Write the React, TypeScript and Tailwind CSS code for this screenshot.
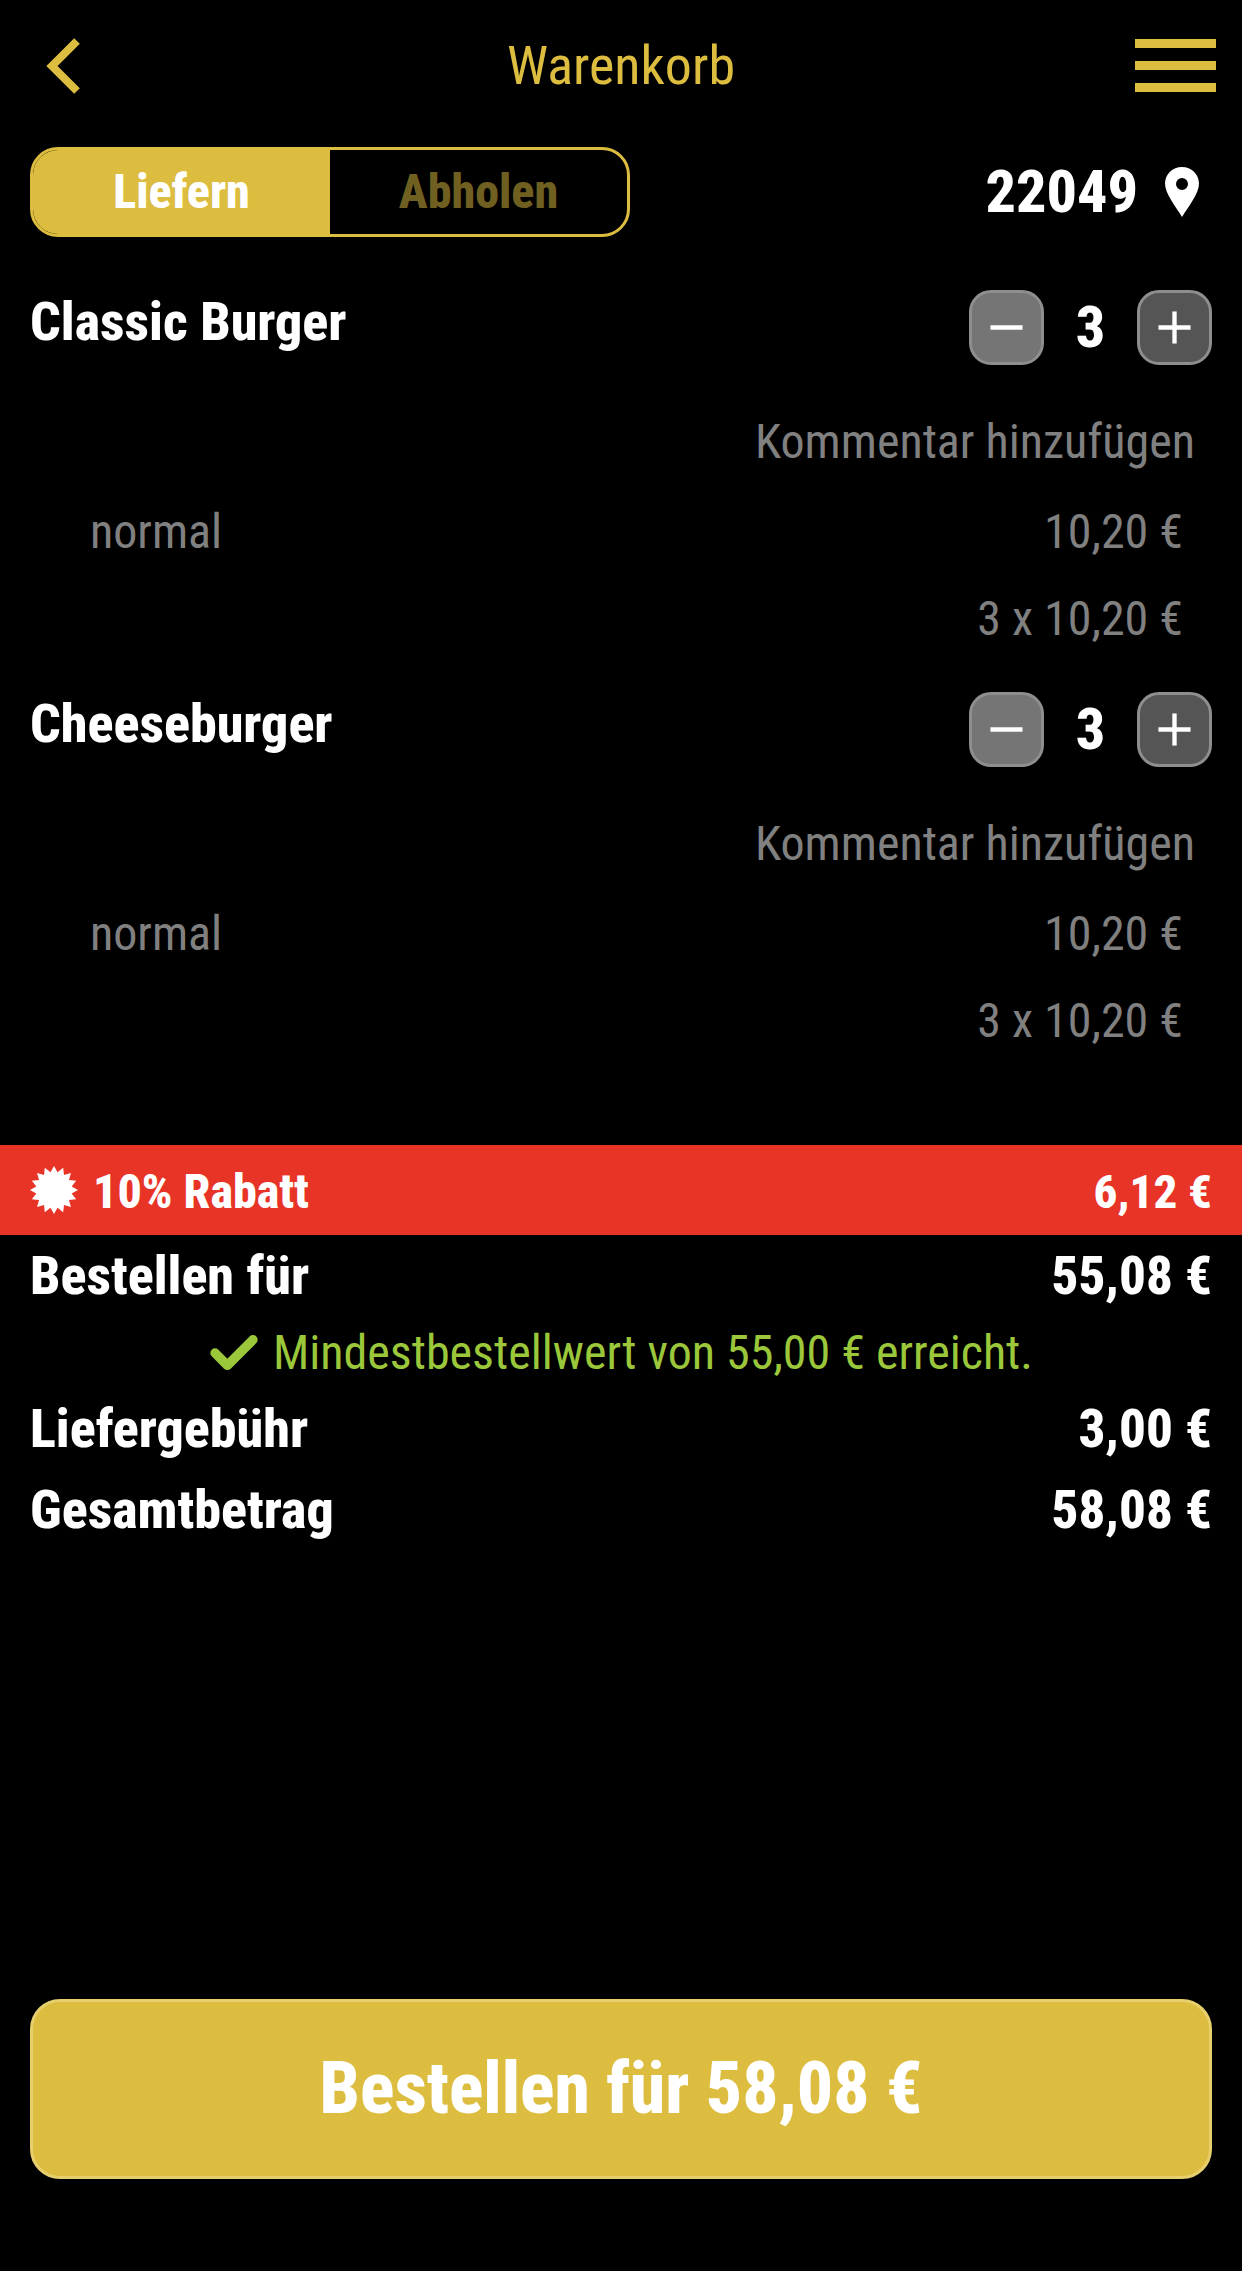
import { Minus, Plus } from "lucide-react";

const font = "font-['Roboto','Liberation_Sans',sans-serif] [font-stretch:75%]";

// 16 spike seal for the discount badge
const sealPoints = Array.from({ length: 32 }, (_, i) => {
  const r = i % 2 === 0 ? 24 : 18;
  const a = (i * Math.PI) / 16 - Math.PI / 2;
  return `${(r * Math.cos(a)).toFixed(2)},${(r * Math.sin(a)).toFixed(2)}`;
}).join(" ");

function Stepper() {
  return (
    <div className="flex items-center h-[75px]">
      <button className="w-[75px] h-[75px] rounded-[22px] bg-[#757575] border-[3px] border-[#8e8e8e] flex items-center justify-center">
        <Minus className="w-[55px] h-[55px] text-white" strokeWidth={1.9} strokeLinecap="butt" />
      </button>
      <span className="w-[93px] text-center text-[58px] leading-[75px] font-extrabold text-white">3</span>
      <button className="w-[75px] h-[75px] rounded-[22px] bg-[#555555] border-[3px] border-[#8e8e8e] flex items-center justify-center">
        <Plus className="w-[55px] h-[55px] text-white" strokeWidth={1.9} strokeLinecap="butt" />
      </button>
    </div>
  );
}

function CartItem({ name }: { name: string }) {
  return (
    <div className="h-[402px]">
      <div className="flex items-start justify-between h-[122px]">
        <span className="text-[54px] leading-[64px] font-extrabold text-white">{name}</span>
        <Stepper />
      </div>
      <div className="text-right text-[48px] leading-[60px] text-[#808080] pr-[17px]">Kommentar hinzufügen</div>
      <div className="flex justify-between text-[48px] leading-[60px] text-[#808080] pl-[60px] pr-[29px] mt-[30px]">
        <span>normal</span>
        <span>10,20 €</span>
      </div>
      <div className="text-right text-[48px] leading-[60px] text-[#808080] pr-[29px] mt-[27px]">3 x 10,20 €</div>
    </div>
  );
}

function SummaryRow({ label, value }: { label: string; value: string }) {
  return (
    <div className="flex justify-between text-[54px] leading-[60px] font-extrabold text-white px-[30px]">
      <span>{label}</span>
      <span className="text-[53px]">{value}</span>
    </div>
  );
}

export default function App() {
  return (
    <div className={`w-[1242px] h-[2271px] bg-black overflow-hidden ${font}`}>
      {/* Header */}
      <div className="relative h-[130px] flex items-center justify-center">
        <svg viewBox="0 0 36 56" className="absolute left-[46px] top-[38px] w-[36px] h-[56px]">
          <polyline points="31,3 6,28 31,53" fill="none" stroke="#dcbd3f" strokeWidth="8" />
        </svg>
        <span className="text-[54px] text-[#dcbd3f]">Warenkorb</span>
        <div className="absolute left-[1135px] top-[39px] w-[81px] flex flex-col gap-[13px]">
          <div className="h-[9px] bg-[#dcbd3f]" />
          <div className="h-[9px] bg-[#dcbd3f]" />
          <div className="h-[9px] bg-[#dcbd3f]" />
        </div>
      </div>

      {/* Delivery toggle + zip */}
      <div className="flex items-center justify-between h-[90px] mt-[17px] pl-[30px] pr-[43px]">
        <div className="flex w-[600px] h-[90px] rounded-[28px] border-[3px] border-[#dcbd3f] overflow-hidden">
          <div className="w-[297px] bg-[#dcbd3f] flex items-center justify-center text-[48px] font-extrabold text-white">Liefern</div>
          <div className="flex-1 flex items-center justify-center text-[48px] font-extrabold text-[#6f5f20]">Abholen</div>
        </div>
        <div className="flex items-center gap-[27px]">
          <span className="text-[60px] font-extrabold text-white">22049</span>
          <svg viewBox="0 0 34 50" className="w-[34px] h-[50px]">
            <path fill="#fff" fillRule="evenodd" d="M17 0C7.6 0 0 7.4 0 16.6 0 27 11 40 17 50c6-10 17-23 17-33.4C34 7.4 26.4 0 17 0Zm0 11a6 6 0 1 1 0 12 6 6 0 0 1 0-12Z" />
          </svg>
        </div>
      </div>

      {/* Items */}
      <div className="pl-[30px] pr-[30px] mt-[53px]">
        <CartItem name="Classic Burger" />
        <CartItem name="Cheeseburger" />
      </div>

      {/* Discount */}
      <div className="h-[90px] mt-[51px] bg-[#e83426] flex items-center justify-between px-[30px] text-[48px] font-extrabold text-white">
        <div className="flex items-center gap-[15px]">
          <svg viewBox="-24 -24 48 48" className="w-[48px] h-[48px]">
            <polygon fill="#fff" points={sealPoints} />
          </svg>
          <span className="relative top-[2px]">10% Rabatt</span>
        </div>
        <span className="relative top-[2px] text-[47px]">6,12 €</span>
      </div>

      {/* Summary */}
      <div className="mt-[11px]">
        <SummaryRow label="Bestellen für" value="55,08 €" />
        <div className="flex items-center justify-center gap-[14px] h-[60px] mt-[17px] text-[48px] text-[#9bc73b]">
          <svg viewBox="0 0 50 38" className="w-[50px] h-[36px]">
            <path d="M5 19 18 32 45 5" fill="none" stroke="#9bc73b" strokeWidth="10" strokeLinecap="round" strokeLinejoin="round" />
          </svg>
          <span>Mindestbestellwert von 55,00 € erreicht.</span>
        </div>
        <div className="mt-[16px]">
          <SummaryRow label="Liefergebühr" value="3,00 €" />
        </div>
        <div className="mt-[21px]">
          <SummaryRow label="Gesamtbetrag" value="58,08 €" />
        </div>
      </div>

      {/* Order button */}
      <div className="px-[30px] mt-[459px]">
        <button className="w-full h-[180px] rounded-[30px] bg-[#dcbd3f] border-[3px] border-[#e8cf6d] text-[71.5px] font-extrabold text-white">
          Bestellen für 58,08 €
        </button>
      </div>
    </div>
  );
}
